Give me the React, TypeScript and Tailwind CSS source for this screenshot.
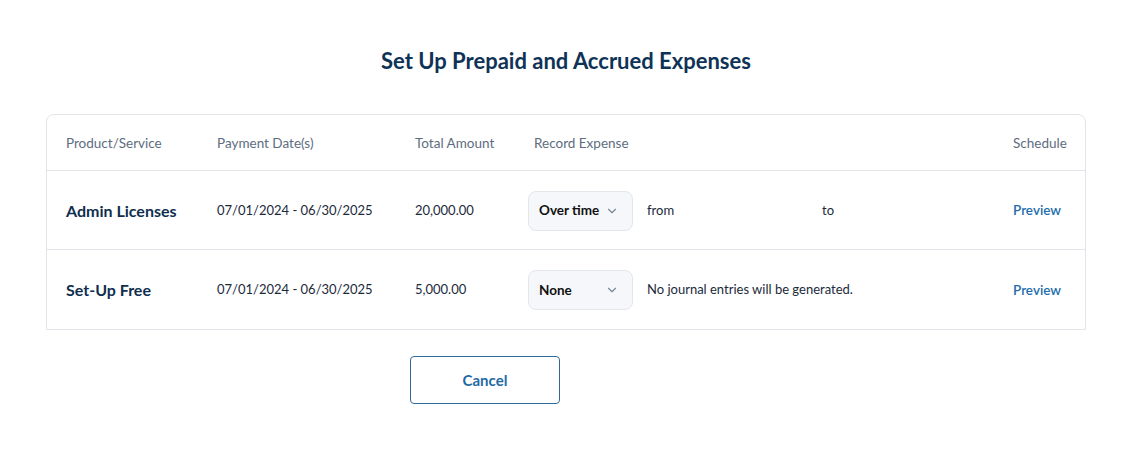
import React from "react";
import { ChevronDown } from "lucide-react";

type Row = {
  name: string;
  dates: string;
  amount: string;
  mode: string;
  detail: React.ReactNode;
};

const rows: Row[] = [
  {
    name: "Admin Licenses",
    dates: "07/01/2024 - 06/30/2025",
    amount: "20,000.00",
    mode: "Over time",
    detail: (
      <div className="flex items-center">
        <span className="w-[175px]">from</span>
        <span>to</span>
      </div>
    ),
  },
  {
    name: "Set-Up Free",
    dates: "07/01/2024 - 06/30/2025",
    amount: "5,000.00",
    mode: "None",
    detail: <span>No journal entries will be generated.</span>,
  },
];

const cols = "grid grid-cols-[151px_198px_113px_1fr_53px] items-center pl-[19px] pr-[19px]";

const App = () => {
  return (
    <div
      className="min-h-[450px] bg-white pt-[46px]"
      style={{ fontFamily: "Lato, 'Open Sans', sans-serif" }}
    >
      <h1 className="text-center text-[22px] leading-[30px] font-bold text-[#0f3356]">
        Set Up Prepaid and Accrued Expenses
      </h1>

      <div className="mx-[46px] mt-[38px] border border-[#e1e4e8] rounded-t-lg">
        {/* Header */}
        <div className={`${cols} h-[56px] pt-[1px] text-[13.5px] text-[#5d6d80] border-b border-[#e1e4e8]`}>
          <span>Product/Service</span>
          <span>Payment Date(s)</span>
          <span>Total Amount</span>
          <span className="pl-1.5">Record Expense</span>
          <span className="whitespace-nowrap">Schedule</span>
        </div>

        {rows.map((r, i) => (
          <div
            key={r.name}
            className={`${cols} h-[79px] pt-[1px] ${i < rows.length - 1 ? "border-b border-[#e1e4e8]" : ""}`}
          >
            <span className="text-[16px] font-bold text-[#102f4f]">{r.name}</span>
            <span className="text-[13px] text-[#1b2a3a]">{r.dates}</span>
            <span className="text-[13px] text-[#1b2a3a]">{r.amount}</span>
            <div className="flex items-center gap-[14px] text-[13px] text-[#1b2a3a] whitespace-nowrap">
              <button className="flex items-center justify-between w-[105px] h-[40px] shrink-0 pl-[10px] pr-[13px] rounded-lg border border-[#e3e6eb] bg-[#f5f7fa] text-[13.5px] font-bold text-[#111]">
                {r.mode}
                <ChevronDown size={14} strokeWidth={2} className="text-[#7a8796]" />
              </button>
              {r.detail}
            </div>
            <span className="text-[13.5px] font-semibold text-[#1f6dab]">Preview</span>
          </div>
        ))}
      </div>

      <div className="flex justify-center gap-3 mt-[26px]">
        <button className="w-[150px] h-[48px] rounded border border-[#2c6a9c] text-[15px] font-bold text-[#1f6aa5]">
          Cancel
        </button>
        <div className="w-[150px] h-[48px] invisible" />
      </div>
    </div>
  );
};

export default App;
